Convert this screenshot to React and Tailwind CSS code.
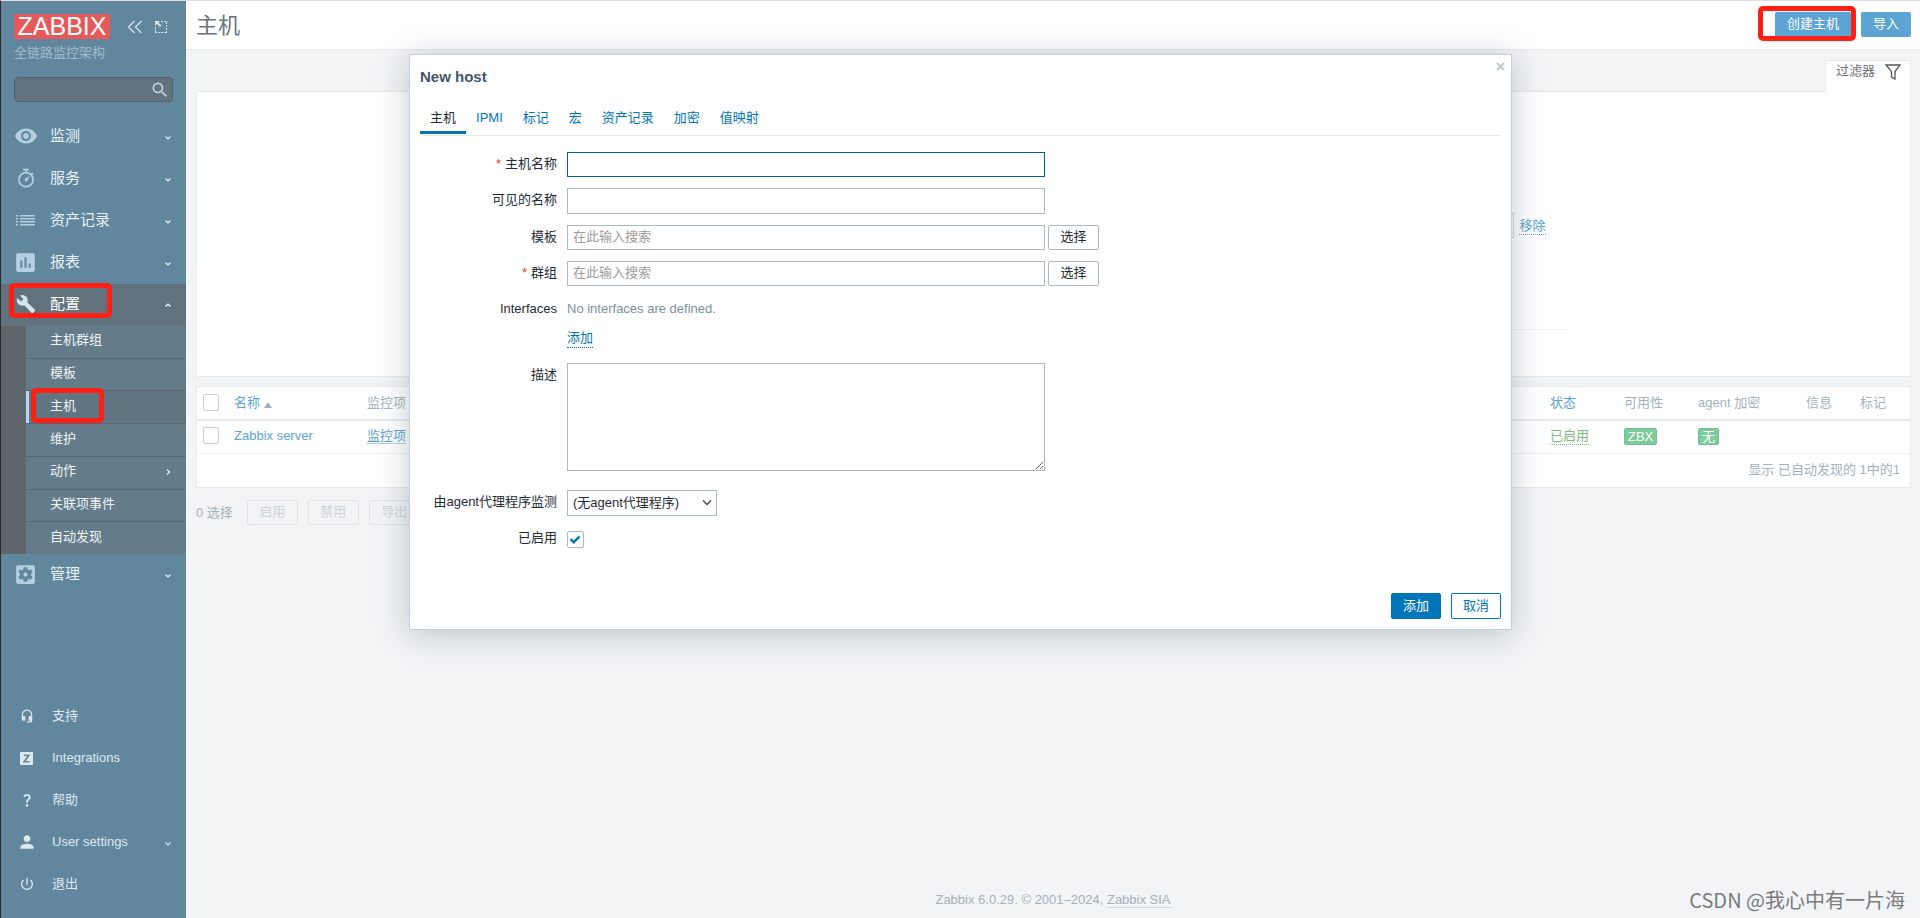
import React, { useState } from "react";
import {
  MdAssessment,
  MdBuild,
  MdHeadsetMic,
  MdPerson,
  MdPowerSettingsNew,
  MdQuestionMark,
  MdRemoveRedEye,
  MdSearch,
  MdSettingsApplications,
} from "react-icons/md";

function StopwatchIcon({ className }) {
  return (
    <svg viewBox="0 0 24 24" fill="none" stroke="currentColor" strokeWidth="2" className={className}>
      <circle cx="12" cy="14" r="8.5" />
      <path d="M8.5 2h7M12 2v3.5M18.5 6l2 2" />
      <path d="M16.5 9.5l-3 6a1.8 1.8 0 1 1-2.600-2.600z" fill="currentColor" stroke="none" />
    </svg>
  );
}

function ListIcon({ className }) {
  return (
    <svg viewBox="0 0 19 19" fill="currentColor" className={className}>
      <path d="M0 4h2v1.500H0zM4 4h15v1.500H4zM0 7h2v1.500H0zM4 7h15v1.500H4zM0 10h2v1.500H0zM4 10h15v1.500H4zM0 13h2v1.500H0zM4 13h15v1.500H4z" />
    </svg>
  );
}

function IntegrationsIcon({ className }) {
  return (
    <svg viewBox="0 0 14 14" className={className}>
      <rect width="14" height="14" rx="1" fill="currentColor" />
      <path d="M4 3.500h5.500L4.500 10.500H10.500" fill="none" stroke="#61879e" strokeWidth="1.800" />
    </svg>
  );
}

function Chevron({ dir = "down" }) {
  const paths = {
    down: "M1.500 3.500L4 6l2.500-2.500",
    up: "M1.500 5.500L4 3l2.500 2.500",
    right: "M3 1.500L5.500 4L3 6.500",
  };
  return (
    <svg viewBox="0 0 8 8" fill="none" stroke="currentColor" strokeWidth="1.200" className="mt-0.5 h-2 w-2">
      <path d={paths[dir]} />
    </svg>
  );
}

const subMenu = [
  { label: "主机群组" },
  { label: "模板" },
  { label: "主机", active: true },
  { label: "维护" },
  { label: "动作", more: true },
  { label: "关联项事件" },
  { label: "自动发现" },
];

const userMenu = [
  { label: "支持", icon: MdHeadsetMic, iconSize: "h-3.5 w-3.5" },
  { label: "Integrations", icon: IntegrationsIcon, iconSize: "h-[13px] w-[13px]" },
  { label: "帮助", icon: MdQuestionMark, iconSize: "h-4 w-4" },
  { label: "User settings", icon: MdPerson, iconSize: "h-5 w-5", more: true },
  { label: "退出", icon: MdPowerSettingsNew, iconSize: "h-4 w-4" },
];

function MenuItem({ label, icon: Icon, iconSize = "h-6 w-6", open, marked }) {
  return (
    <a
      href="#"
      className={`relative flex h-[42px] items-center pr-3.5 pb-0.5 text-[15px] ${
        open ? "bg-[#62727d] text-white" : "text-[#e9f0f5]"
      }`}
    >
      <span className={`flex w-[49px] justify-center ${open ? "text-[#d3e5f3]" : "text-[#b4cfdf]"}`}>
        <Icon className={iconSize} />
      </span>
      <span className="flex-1 leading-5">{label}</span>
      <Chevron dir={open ? "up" : "down"} />
      {marked && <span className="absolute -top-px left-2 h-[35px] w-[103px] rounded-[5px] border-[5px] border-[#ff2013]" />}
    </a>
  );
}

function Sidebar() {
  return (
    <aside className="flex w-[185px] shrink-0 flex-col bg-[#61879e] text-[13px]">
      <div className="px-[13px] pt-[13px]">
        <div className="flex items-center">
          <a href="#" className="flex h-[25px] w-24 items-center justify-center bg-[#e45959] text-[25px] leading-none text-white">
            ZABBIX
          </a>
          <button aria-label="收起" className="ml-[17px] text-[#d5e3ec]">
            <svg viewBox="0 0 16 14" fill="none" stroke="currentColor" strokeWidth="1.300" className="h-3.5 w-4">
              <path d="M7.500 1L1.500 7l6 6M14.500 1l-6 6 6 6" />
            </svg>
          </button>
          <button aria-label="隐藏" className="ml-[11px] text-[#d5e3ec]">
            <svg viewBox="0 0 14 14" fill="none" stroke="currentColor" className="h-3.5 w-3.5">
              <path d="M7 1.500h6.500M12.500 2v11M1.500 7v6M1 12.500h12" strokeDasharray="2 1" />
              <path d="M1 1h5L4.500 2.500l3 3-1.500 1.500-3-3L1 6z" fill="currentColor" stroke="none" />
            </svg>
          </button>
        </div>
        <div className="mt-1 leading-5 text-[#a3bccb]">全链路监控架构</div>
        <div className="mt-3.5 flex h-[25px] items-center rounded-sm border border-[#56616a] bg-[#62727e] pr-0.5">
          <input aria-label="搜索" className="h-full min-w-0 flex-1 bg-transparent px-1 text-white outline-none" />
          <MdSearch className="h-5 w-5 text-[#c0d3df]" />
        </div>
      </div>

      <nav className="mt-3.5">
        <MenuItem label="监测" icon={MdRemoveRedEye} />
        <MenuItem label="服务" icon={StopwatchIcon} iconSize="h-5 w-5" />
        <MenuItem label="资产记录" icon={ListIcon} iconSize="h-[19px] w-[19px]" />
        <MenuItem label="报表" icon={MdAssessment} iconSize="h-[25px] w-[25px]" />
        <MenuItem label="配置" icon={MdBuild} iconSize="h-5 w-5" open marked />
        <ul className="flex h-[228px] flex-col border-l-[25px] border-[#5e666c] bg-[#647b8a]">
          {subMenu.map((item, i) => (
            <li
              key={item.label}
              className={`relative flex-1 border-[#596870] ${i > 0 ? "border-t" : ""} ${item.active ? "bg-[#617482]" : ""}`}
            >
              <a
                href="#"
                className={`flex h-full items-center border-l-[3px] pr-3.5 pb-[3px] pl-[21px] text-[#f0f4f7] ${
                  item.active ? "border-[#abdcff]" : "border-transparent"
                }`}
              >
                <span className="flex-1 leading-5">{item.label}</span>
                {item.more && <Chevron dir="right" />}
              </a>
              {item.active && <span className="absolute -top-[3px] left-[5px] h-[35px] w-[73px] rounded-[5px] border-[5px] border-[#ff2013]" />}
            </li>
          ))}
        </ul>
        <MenuItem label="管理" icon={MdSettingsApplications} iconSize="h-[25px] w-[25px]" />
      </nav>

      <nav className="mt-auto pb-[13px] text-[#dfe8ee]">
        {userMenu.map(({ label, icon: Icon, iconSize, more }) => (
          <a key={label} href="#" className="flex h-[42px] items-center pr-3.5">
            <span className="flex w-[51px] justify-center">
              <Icon className={iconSize} />
            </span>
            <span className="flex-1 leading-5">{label}</span>
            {more && <Chevron />}
          </a>
        ))}
      </nav>
    </aside>
  );
}

function FilterPanel() {
  return (
    <section className="mt-2.5">
      <div className="flex justify-end">
        <button className="relative -mb-px flex h-8 items-start gap-2.5 border border-b-0 border-[#e6eaec] bg-white pr-[9px] pl-2.5 text-[#6c7378]">
          <span className="leading-5">过滤器</span>
          <svg viewBox="0 0 16 16" fill="none" stroke="#55595c" strokeWidth="1.300" className="mt-[3px] h-4 w-4">
            <path d="M1 1h14L10 7.500V15l-3.500-2V7.500z" />
          </svg>
        </button>
      </div>
      <div className="h-[286px] border border-[#e6eaec] bg-white">
        <div className="mx-auto h-[238px] w-[1026px] border-b border-[#f0f2f3] pt-[121px]">
          <div className="flex items-center justify-end gap-[5px] pr-[21px]">
            <input aria-label="值" className="h-[25px] w-[150px] border border-[#ccd5da]" />
            <button className="border-b border-dotted border-[#5ba3d0] leading-[17px] text-[#5ba3d0]">移除</button>
          </div>
        </div>
      </div>
    </section>
  );
}

function RowCheckbox({ label }) {
  return (
    <input
      type="checkbox"
      aria-label={label}
      className="mb-0.5 block h-[17px] w-4 appearance-none rounded-xs border border-[#c5d0d6] bg-white"
    />
  );
}

const badgeClass =
  "mb-0.5 inline-block h-[17px] rounded-xs border border-[#6fbf90] bg-[#7bcb9b] px-[3px] align-middle leading-[15px] text-white";

function HostTable() {
  return (
    <div className="mt-[9px] border border-[#e6eaec] bg-white">
      <table className="w-full table-fixed text-left whitespace-nowrap text-[#a2b2bc]">
        <colgroup>
          <col className="w-8" />
          <col className="w-[133px]" />
          <col />
          <col className="w-[74px]" />
          <col className="w-[74px]" />
          <col className="w-[108px]" />
          <col className="w-[54px]" />
          <col className="w-[55px]" />
        </colgroup>
        <thead>
          <tr className="h-[33px] border-b-2 border-[#e6eaec]">
            <th className="pl-1.5 font-normal"><RowCheckbox label="全选" /></th>
            <th className="px-[5px] font-normal">
              <a href="#" className="flex items-center gap-1 text-[#5ba3d0]">
                名称
                <span className="mt-1 h-0 w-0 border-x-4 border-b-[6px] border-x-transparent border-b-[#a2b2bc]" />
              </a>
            </th>
            <th className="px-[5px] font-normal">监控项</th>
            <th className="px-[5px] font-normal"><a href="#" className="text-[#5ba3d0]">状态</a></th>
            <th className="px-[5px] font-normal">可用性</th>
            <th className="px-[5px] font-normal">agent 加密</th>
            <th className="px-[5px] font-normal">信息</th>
            <th className="px-[5px] font-normal">标记</th>
          </tr>
        </thead>
        <tbody>
          <tr className="h-[33px] border-b border-[#eff1f2]">
            <td className="pl-1.5"><RowCheckbox label="Zabbix server" /></td>
            <td className="px-[5px] pb-0.5"><a href="#" className="text-[#5ba3d0]">Zabbix server</a></td>
            <td className="px-[5px] pb-0.5"><a href="#" className="border-b border-[#a8cbe0] text-[#5ba3d0]">监控项</a></td>
            <td className="px-[5px] pb-0.5">
              <button className="border-b border-dotted border-[#7dbb83] leading-[17px] text-[#7dbb83]">已启用</button>
            </td>
            <td className="px-[5px]"><span className={badgeClass}>ZBX</span></td>
            <td className="px-[5px]"><span className={badgeClass}>无</span></td>
            <td />
            <td />
          </tr>
        </tbody>
        <tfoot>
          <tr className="h-[34px]">
            <td colSpan={8} className="px-2.5 pb-0.5 text-right">显示 已自动发现的 1中的1</td>
          </tr>
        </tfoot>
      </table>
    </div>
  );
}

const inputClass = "w-[478px] border border-[#acbbc2] bg-white px-[5px] pb-0.5 text-[#1f2c33] outline-none placeholder:text-[#9c9c9c]";

function FormRow({ label, htmlFor, required, top, className = "", children }) {
  return (
    <div className={`flex gap-2.5 ${top ? "items-start" : "items-center"} ${className}`}>
      <label htmlFor={htmlFor} className={`w-[137px] text-right leading-5 whitespace-nowrap ${top ? "pt-0.5" : "pb-0.5"}`}>
        {required && <span className="mr-1 text-[#e33734]">*</span>}
        {label}
      </label>
      {children}
    </div>
  );
}

function SearchField({ id }) {
  return (
    <div className="flex gap-[3px]">
      <input id={id} placeholder="在此输入搜索" className={`h-[25px] ${inputClass}`} />
      <button className="h-[25px] w-[51px] rounded-xs border border-[#acbbc2] pb-0.5 leading-none">选择</button>
    </div>
  );
}

const tabs = ["主机", "IPMI", "标记", "宏", "资产记录", "加密", "值映射"];

function HostDialog() {
  const [tab, setTab] = useState("主机");
  const [enabled, setEnabled] = useState(true);

  return (
    <div className="absolute inset-x-0 top-[53px] z-10 flex justify-center">
      <div
        role="dialog"
        aria-label="New host"
        className="relative w-[1103px] border border-[#c5d0d6] bg-white px-2.5 pb-2.5 text-[#1f2c33] shadow-[0_4px_30px_rgba(80,105,120,0.35)]"
      >
        <button aria-label="关闭" className="absolute top-[7px] right-1.5 text-[#bbc7cd]">
          <svg viewBox="0 0 9 9" stroke="currentColor" strokeWidth="2" className="h-[9px] w-[9px]">
            <path d="M1 1l7 7M8 1L1 8" />
          </svg>
        </button>
        <h4 className="pt-3 text-[15px] leading-5 font-bold text-[#42596a]">New host</h4>

        <div role="tablist" className="mt-4 flex border-b border-[#e6eaec] pb-px">
          {tabs.map((name) => (
            <button
              key={name}
              role="tab"
              aria-selected={tab === name}
              onClick={() => setTab(name)}
              className={`border-b-[3px] px-2.5 pt-1 pb-0.5 leading-[22px] ${
                tab === name ? "border-[#0275b8] text-[#1f2c33]" : "border-transparent text-[#0275b8]"
              }`}
            >
              {name}
            </button>
          ))}
        </div>

        <form className="mt-4 flex flex-col gap-[11px]" onSubmit={(e) => e.preventDefault()}>
          <FormRow label="主机名称" htmlFor="host" required>
            <input id="host" className="h-[25px] w-[478px] border border-[#00609a] px-[5px] outline-none" />
          </FormRow>
          <FormRow label="可见的名称" htmlFor="visible">
            <input id="visible" className={`h-[26px] ${inputClass}`} />
          </FormRow>
          <FormRow label="模板" htmlFor="templates">
            <SearchField id="templates" />
          </FormRow>
          <FormRow label="群组" htmlFor="groups" required>
            <SearchField id="groups" />
          </FormRow>
          <FormRow label="Interfaces" htmlFor="add-interface" top>
            <div className="flex flex-col items-start gap-2.5 pt-0.5">
              <span className="leading-5 text-[#7b909c]">No interfaces are defined.</span>
              <button id="add-interface" className="border-b border-dotted border-[#0275b8] leading-[18px] text-[#0275b8]">
                添加
              </button>
            </div>
          </FormRow>
          <FormRow label="描述" htmlFor="description" top className="mt-1 mb-2">
            <textarea id="description" className="h-[108px] w-[478px] border border-[#acbbc2] px-[5px] outline-none" />
          </FormRow>
          <FormRow label="由agent代理程序监测" htmlFor="proxy">
            <div className="relative">
              <select id="proxy" className="block h-[26px] w-[150px] appearance-none border border-[#acbbc2] pl-[5px] outline-none">
                <option>(无agent代理程序)</option>
              </select>
              <svg
                viewBox="0 0 10 8"
                fill="none"
                stroke="#3c464b"
                strokeWidth="1.300"
                className="pointer-events-none absolute top-[9px] right-[5px] h-2 w-2.5"
              >
                <path d="M1 1.500l4 4 4-4" />
              </svg>
            </div>
          </FormRow>
          <FormRow label="已启用" htmlFor="enabled" className="h-6">
            <div className="grid">
              <input
                id="enabled"
                type="checkbox"
                checked={enabled}
                onChange={(e) => setEnabled(e.target.checked)}
                className="col-start-1 row-start-1 h-[17px] w-[17px] appearance-none rounded-xs border border-[#acbbc2]"
              />
              {enabled && (
                <svg
                  viewBox="0 0 17 17"
                  fill="none"
                  stroke="#0275b8"
                  strokeWidth="2.400"
                  className="pointer-events-none col-start-1 row-start-1 h-[17px] w-[17px]"
                >
                  <path d="M3.500 8l3.200 3.200L12.500 5.500" />
                </svg>
              )}
            </div>
          </FormRow>
        </form>

        <div className="mt-[42px] flex justify-end gap-2.5">
          <button className="h-[26px] w-[50px] rounded-xs border border-[#0275b8] bg-[#0275b8] pb-0.5 leading-none text-white">添加</button>
          <button className="h-[26px] w-[50px] rounded-xs border border-[#0275b8] pb-0.5 leading-none text-[#0275b8]">取消</button>
        </div>
      </div>
    </div>
  );
}

export default function App() {
  return (
    <div className="relative flex min-h-screen border-t border-l border-t-[#dfdfdf] border-l-[#2b2b2b] bg-[#f2f4f6] font-['Liberation_Sans','Noto_Sans_CJK_SC',sans-serif] text-[13px]">
      <Sidebar />
      <div className="flex min-w-0 flex-1 flex-col">
        <header className="flex h-[49px] items-start justify-between border-b border-[#e6eaec] bg-white pr-[9px] pl-2.5">
          <h1 className="pt-2.5 text-[22px] leading-[30px] text-[#6c7378]">主机</h1>
          <div className="flex gap-2.5 pt-[11px] text-white">
            <div className="relative">
              <button className="h-[25px] rounded-xs bg-[#5ba4d3] px-3 pb-0.5 leading-none">创建主机</button>
              <span className="pointer-events-none absolute -top-1.5 -right-[5px] h-[35px] w-[98px] rounded-[5px] border-[5px] border-[#ff2013]" />
            </div>
            <button className="h-[25px] rounded-xs bg-[#5ba4d3] px-3 pb-0.5 leading-none">导入</button>
          </div>
        </header>

        <main className="pr-[9px] pl-2.5">
          <FilterPanel />
          <HostTable />
          <div className="mt-3 flex items-center gap-2.5 text-[#a2b2bc]">
            <span className="mr-1">0 选择</span>
            {["启用", "禁用", "导出"].map((name) => (
              <button key={name} disabled className="h-[25px] w-[51px] rounded-xs border border-[#dfe4e7] pb-0.5 leading-none text-[#ccd5da]">
                {name}
              </button>
            ))}
          </div>
        </main>

        <footer className="relative mt-auto pb-2 text-center leading-5 text-[#a2b2bc]">
          Zabbix 6.0.29. © 2001–2024,{" "}
          <a href="#" className="border-b border-[#ccd8df]">Zabbix SIA</a>
          <span className="absolute right-[15px] bottom-1 font-['Noto_Sans_CJK_SC',sans-serif] text-xl leading-7 text-[#7a7c7e]">
            CSDN @我心中有一片海
          </span>
        </footer>
      </div>
      <HostDialog />
    </div>
  );
}
